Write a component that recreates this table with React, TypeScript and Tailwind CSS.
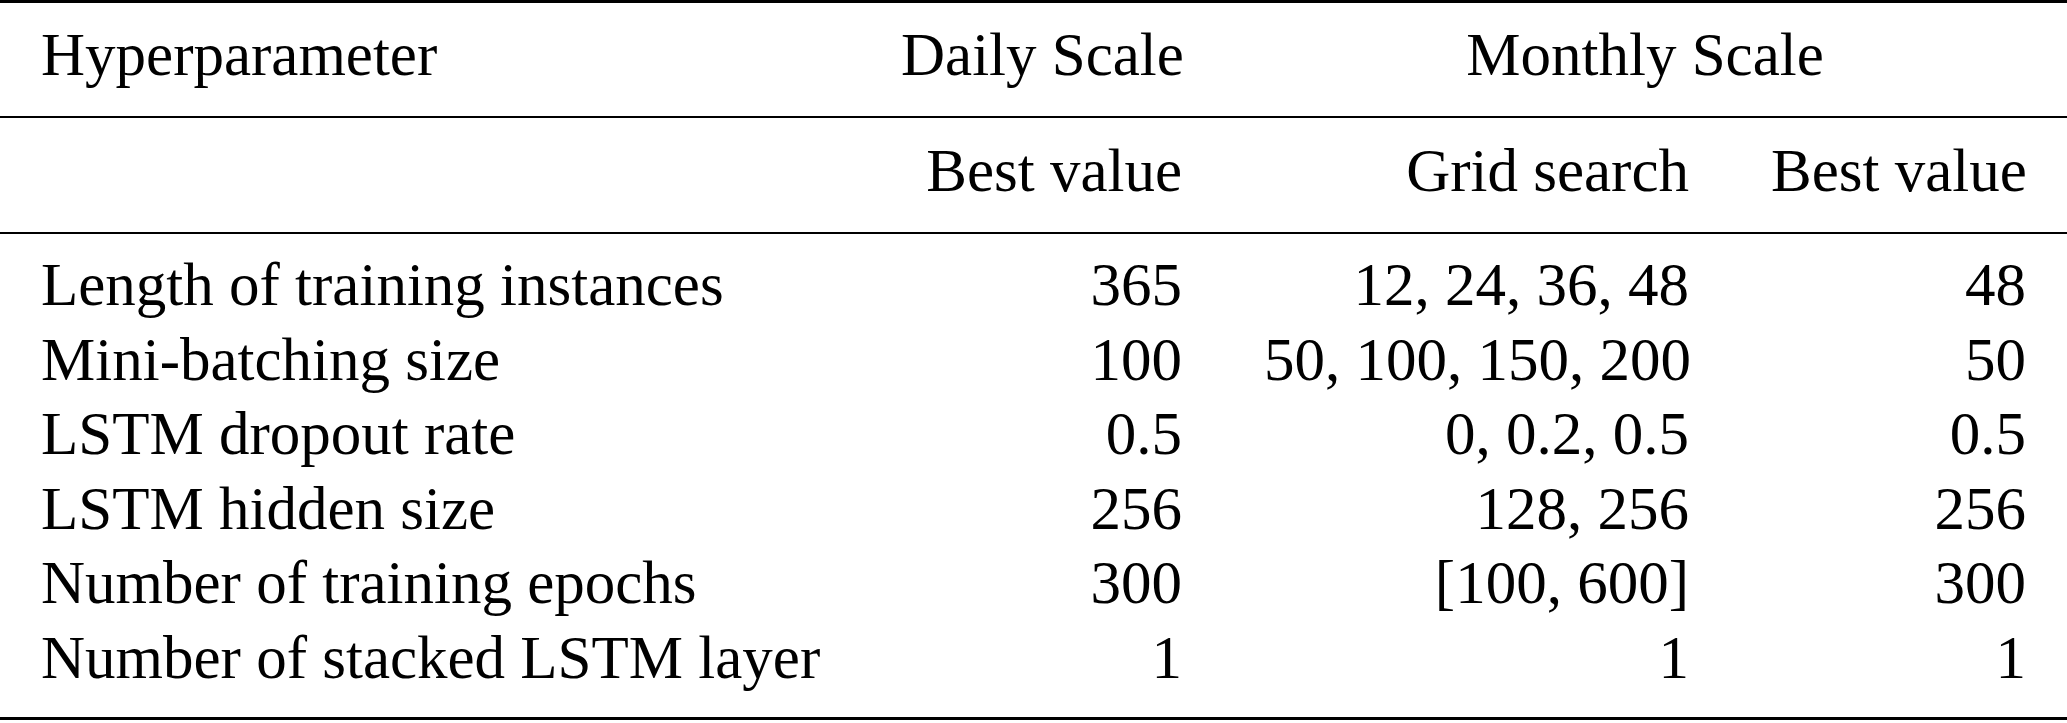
const rows = [
  ["Length of training instances", "365", "12, 24, 36, 48", "48"],
  ["Mini-batching size", "100", "50, 100, 150, 200", "50"],
  ["LSTM dropout rate", "0.5", "0, 0.2, 0.5", "0.5"],
  ["LSTM hidden size", "256", "128, 256", "256"],
  ["Number of training epochs", "300", "[100, 600]", "300"],
  ["Number of stacked LSTM layer", "1", "1", "1"],
];

const cols = "grid grid-cols-[860px_363px_507px_337px]";

export default function App() {
  return (
    <div className="w-[2067px] h-[723px] bg-white text-black font-['Liberation_Serif','Times_New_Roman',serif] text-[61px] leading-[74.6px]">
      <div className="border-t-[3px] border-black">
        {/* header: scales */}
        <div className={`${cols} h-[113px] pt-[15px]`}>
          <div className="px-[41px] text-left whitespace-nowrap">Hyperparameter</div>
          <div className="px-[41px] text-right whitespace-nowrap">Daily Scale</div>
          <div className="col-span-2 px-[41px] text-center whitespace-nowrap">Monthly Scale</div>
        </div>

        {/* header: sub columns */}
        <div className={`${cols} h-[116px] pt-[16px] border-t-2 border-black`}>
          <div className="px-[41px]"></div>
          <div className="px-[41px] text-right whitespace-nowrap">Best value</div>
          <div className="px-[41px] text-right whitespace-nowrap">Grid search</div>
          <div className="px-[41px] text-right whitespace-nowrap">Best value</div>
        </div>

        {/* body */}
        <div className="h-[488px] pt-[14px] border-t-2 border-b-[3px] border-black">
          {rows.map((r) => (
            <div key={r[0]} className={cols}>
              <div className="px-[41px] text-left whitespace-nowrap">{r[0]}</div>
              <div className="px-[41px] text-right whitespace-nowrap">{r[1]}</div>
              <div className="px-[41px] text-right whitespace-nowrap">{r[2]}</div>
              <div className="px-[41px] text-right whitespace-nowrap">{r[3]}</div>
            </div>
          ))}
        </div>
      </div>
    </div>
  );
}
